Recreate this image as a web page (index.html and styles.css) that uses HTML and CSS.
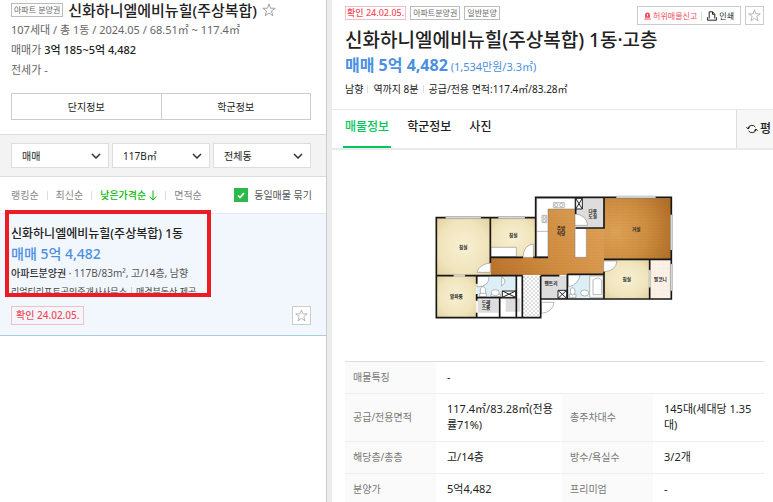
FILE: index.html
```html
<!DOCTYPE html>
<html lang="ko">
<head>
<meta charset="utf-8">
<title>신화하니엘에비뉴힐(주상복합)</title>
<link rel="stylesheet" href="styles.css">
</head>
<body>
<svg class="defs" aria-hidden="true">
  <symbol id="star" viewBox="0 0 14 14"><path d="M7 .9 8.5 5.2 13.2 5.3 9.5 8 10.8 12.7 7 10 3.2 12.7 4.5 8 .8 5.3 5.5 5.2Z" fill="#fff" stroke="currentColor" stroke-width=".9"/></symbol>
</svg>
<div class="app">
  <aside class="complex">
    <header class="summary">
      <div class="summary-title">
        <span class="tag">아파트 분양권</span>
        <h2>신화하니엘에비뉴힐(주상복합)</h2>
        <button class="plain-star" aria-label="관심단지"><svg><use href="#star"/></svg></button>
      </div>
      <p>107세대 / 총 1동 / 2024.05 / 68.51㎡ ~ 117.4㎡</p>
      <p>매매가 <strong>3억 185~5억 4,482</strong></p>
      <p>전세가 -</p>
      <div class="info-buttons">
        <button>단지정보</button>
        <button>학군정보</button>
      </div>
    </header>
    <div class="filters">
      <select aria-label="거래유형"><option>매매</option></select>
      <select aria-label="면적"><option>117B㎡</option></select>
      <select aria-label="동"><option>전체동</option></select>
    </div>
    <div class="sort">
      <nav class="sort-links">
        <a href="#">랭킹순</a>
        <a href="#">최신순</a>
        <a href="#" class="active">낮은가격순<svg viewBox="0 0 8 11"><path d="M4 .5V10M.8 6.5 4 10 7.2 6.5"/></svg></a>
        <a href="#">면적순</a>
      </nav>
      <label class="group"><input type="checkbox" checked>동일매물 묶기</label>
    </div>
    <article class="item">
      <h3>신화하니엘에비뉴힐(주상복합) 1동</h3>
      <p class="item-price">매매 5억 4,482</p>
      <p class="item-spec"><b>아파트분양권</b> · 117B/83m², 고/14층, 남향</p>
      <p class="item-agent"><span>리얼티리프트공인중개사사무소</span><span>매경부동산 제공</span></p>
      <div class="item-foot">
        <span class="confirm">확인 24.02.05.</span>
        <button class="star-box" aria-label="관심매물"><svg><use href="#star"/></svg></button>
      </div>
      <div class="highlight"></div>
    </article>
  </aside>

  <main class="detail">
    <header class="detail-head">
      <div class="detail-top">
        <div class="tags">
          <span class="confirm small">확인 24.02.05.</span>
          <span class="tag">아파트분양권</span>
          <span class="tag">일반분양</span>
        </div>
        <div class="actions">
          <div class="action-group">
            <button class="report"><svg viewBox="0 0 8 9"><path d="M1.2 6.5V3.4a2.8 2.8 0 0 1 5.6 0v3.1ZM.3 7.3h7.4v1.3H.3Z" fill="currentColor"/><path d="M4 2.2v2.6" stroke="#fff"/></svg>허위매물신고</button>
            <button class="print"><svg viewBox="0 0 10 10"><path d="M2.2 7.5V.8h3.4l2.2 2.4v4.3M5.5.8v2.5h2.3M.6 6.3v2.9h8.8V6.3" fill="none" stroke="currentColor"/></svg>인쇄</button>
          </div>
          <button class="star-box" aria-label="관심매물"><svg><use href="#star"/></svg></button>
        </div>
      </div>
      <h1>신화하니엘에비뉴힐(주상복합) 1동·고층</h1>
      <p class="detail-price"><strong>매매 5억 4,482</strong> <span>(1,534만원/3.3㎡)</span></p>
      <p class="detail-meta"><span>남향</span><span>역까지 8분</span><span>공급/전용 면적:117.4㎡/83.28㎡</span></p>
    </header>
    <div class="tabs">
      <nav>
        <a href="#" class="active">매물정보</a>
        <a href="#">학군정보</a>
        <a href="#">사진</a>
      </nav>
      <button class="unit"><svg viewBox="0 0 12 10"><path d="M2 4.5a4 3.6 0 0 1 7.4-1.4M10 5.5a4 3.6 0 0 1-7.4 1.4M.4 3.2 2 5l1.8-1.6M8.2 6.6 10 5l1.6 1.8" fill="none" stroke="currentColor"/></svg>평</button>
    </div>

    <figure class="plan">
      <svg viewBox="0 0 750 405" role="img" aria-label="평면도">
        <defs>
          <radialGradient id="room" r=".75"><stop offset="0" stop-color="#f8f0d2"/><stop offset=".6" stop-color="#f0e4bc"/><stop offset="1" stop-color="#dfcd98"/></radialGradient>
          <linearGradient id="wood" gradientUnits="userSpaceOnUse" x1="185" y1="250" x2="525" y2="60"><stop offset="0" stop-color="#b8722a"/><stop offset=".45" stop-color="#cf8c40"/><stop offset="1" stop-color="#dfa258"/></linearGradient>
          <radialGradient id="living" gradientUnits="userSpaceOnUse" cx="560" cy="125" r="190"><stop offset="0" stop-color="#dda257"/><stop offset=".5" stop-color="#cd8d40"/><stop offset="1" stop-color="#ad6a24"/></radialGradient>
          <pattern id="grain" width="46" height="16" patternUnits="userSpaceOnUse"><path d="M0 4h46M0 12h46M12 4v8M34 12v8" stroke="#8a4d10" stroke-opacity=".14" fill="none"/></pattern>
          <pattern id="check" width="12" height="12" patternUnits="userSpaceOnUse"><path fill="#fff" d="M0 0h12v12H0z"/><path fill="#dedede" d="M0 0h6v6H0zM6 6h6v6H6z"/></pattern>
          <pattern id="tile" width="13" height="13" patternUnits="userSpaceOnUse"><path fill="#fbf1e6" d="M0 0h13v13H0z"/><path d="M0 0h13M0 0v13" stroke="#efe2d5"/></pattern>
        </defs>
        <path fill="#fff" d="M320 22H727V325H335V383H22V83H320Z"/>
        <g fill="url(#room)">
          <path d="M22 83h161v174H22z"/>
          <path d="M185 83h135v119H185z"/>
          <path d="M22 257h120v126H22z"/>
          <path d="M525 210h137v115H525z"/>
        </g>
        <path fill="url(#wood)" d="M357 57h83v58h85v140H185v-53h172Z"/>
        <path fill="url(#living)" d="M525 25h202v182H525z"/>
        <path fill="url(#grain)" d="M357 57h83v58h85V25h202v182H525v48H185v-53h172Z"/>
        <path fill="#ddd" d="M440 25h85v88h-85zM335 257h80v68h-80zM146 328h63v40h-63zM230 325h44v40h-44z"/>
        <path fill="#dceff6" d="M144 259h116v43h-40v20h-76zM418 258h64v65h-64z"/>
        <path fill="url(#check)" d="M281 257h54v126h-54z"/>
        <path fill="url(#tile)" d="M662 210h65v115h-65z"/>
        <g fill="#fff" stroke="#777" stroke-width="1.5">
          <path d="M186 172h76v28h-76zM323 25h115v32h-81v143h-34zM323 124h34M438 115h34v87h-34zM482 258h40v64h-40zM492 270q14-12 26 0v44h-26z"/>
          <path d="M144 259h36q2 30-36 32zM218 260q20 14 0 28z"/>
          <ellipse cx="162" cy="303" rx="8" ry="13"/><path d="M152 310h20v10h-20zM186 312h28v8h-28zM421 313h20v9h-20z"/>
          <ellipse cx="199" cy="308" rx="12" ry="9"/><ellipse cx="431" cy="304" rx="7" ry="11"/><ellipse cx="467" cy="309" rx="12" ry="9"/>
          <path d="M374 38h32v15h-32zM339 76h14v22h-14z"/><circle cx="382" cy="45" r="5"/><circle cx="397" cy="45" r="5"/><circle cx="346" cy="82" r="4"/><circle cx="346" cy="92" r="4"/>
          <path d="M144 247h40v-28q-34 4-40 28ZM282 202h31v-40q-30 4-31 40ZM438 72v34h38q-4-32-38-34ZM524 213h40q-4 31-40 32ZM418 290q30-4 36-37h-36ZM337 337h38q-4 30-38 33Z"/>
        </g>
        <g fill="none" stroke="#171717" stroke-width="5">
          <path d="M22 83H320V22H727V327H335V383H22ZM184 83v136M320 83v119M184 202h98M313 202h44M22 257h52M108 257h173M143 257v24M143 312v20M143 368v15M143 323h119M212 323v60M262 257v126M280 257v126M335 257v80M335 370v13M335 257h56M415 253v74M415 253h111M525 245v82M525 208H727M662 208v32M662 292v35M440 22v50M440 114h85V22"/>
        </g>
        <g fill="#fff" stroke="#222" stroke-width="3">
          <path d="M220 303h40v19h-40zM220 303l40 19M260 303l-40 19M440 25h20v32h-20zM440 25l20 32M460 25l-20 32M387 301h26v24h-26zM387 301l26 24M413 301l-26 24"/>
        </g>
        <g fill="#ddd" stroke="#888">
          <path d="M50 80h106v6H50zM208 80h80v6h-80zM562 18h118v6H562zM724 74h6v106h-6zM724 222h6v80h-6zM75 254h33v5H75zM660 240h5v52h-5z"/>
        </g>
        <g class="plan-labels">
          <text x="103" y="178">침실</text><text x="253" y="141">침실</text><text x="82" y="324">알파룸</text>
          <text x="171" y="342">드레</text><text x="171" y="357">스룸</text><text x="366" y="286">팬트리</text>
          <text x="396" y="119">주방</text><text x="396" y="134">식당</text><text x="491" y="69">다용</text><text x="491" y="84">도실</text>
          <text x="622" y="123">거실</text><text x="593" y="274">침실</text><text x="694" y="274">발코니</text>
        </g>
      </svg>
    </figure>

    <table>
      <colgroup><col class="c-th"><col class="c-td"><col class="c-th"><col></colgroup>
      <tr><th scope="row">매물특징</th><td colspan="3">-</td></tr>
      <tr><th scope="row">공급/전용면적</th><td>117.4㎡/83.28㎡(전용률71%)</td><th scope="row">총주차대수</th><td>145대(세대당 1.35대)</td></tr>
      <tr><th scope="row">해당층/총층</th><td>고/14층</td><th scope="row">방수/욕실수</th><td>3/2개</td></tr>
      <tr><th scope="row">분양가</th><td>5억4,482</td><th scope="row">프리미엄</th><td>-</td></tr>
    </table>
  </main>
</div>
</body>
</html>
```
FILE: styles.css
```css
* { box-sizing: border-box; }

body {
  margin: 0;
  overflow: hidden;
  color: #222;
  background: #fff;
  font: 11px/20px "Noto Sans", "Noto Sans CJK KR", sans-serif;
}

h1, h2, h3, p, figure { margin: 0; }
a { color: inherit; text-decoration: none; }

button {
  margin: 0;
  padding: 0;
  border: 0;
  color: inherit;
  background: none;
  font: inherit;
}

.defs { position: absolute; width: 0; height: 0; }

.app {
  display: grid;
  grid-template-columns: 332px minmax(0, 1fr);
  height: 100vh;
}

/* Complex panel */
.complex {
  border-right: 5px solid #ececec;
  box-shadow: inset -1px 0 #ccc;
  padding-right: 1px;
}

.summary { padding: 0 15px 14px 11px; }
.summary p { color: #666; white-space: nowrap; }
.summary strong { color: #222; font-weight: 500; }

.summary-title {
  display: flex;
  align-items: center;
  gap: 5px;
  height: 20px;
}

.summary-title h2 {
  font-size: 15px;
  font-weight: 500;
  white-space: nowrap;
}

.tag {
  padding: 0 2px;
  border: 1px solid #bbb;
  color: #666;
  font-size: 8px;
  line-height: 12px;
  white-space: nowrap;
}

.plain-star { display: flex; color: #999; }
.plain-star svg { width: 14px; height: 14px; }

.info-buttons {
  display: flex;
  margin-top: 13px;
  border: 1px solid #ccc;
}

.info-buttons button {
  flex: 1;
  height: 25px;
  font-size: 10px;
}

.info-buttons button + button { border-left: 1px solid #ccc; }

.filters {
  display: flex;
  gap: 3px;
  padding: 8px 15px 8px 11px;
  border: solid #ddd;
  border-width: 1px 0;
  background: #f3f3f3;
}

.filters select {
  flex: 1;
  height: 25px;
  padding: 0 10px;
  appearance: none;
  border: 1px solid #ddd;
  border-radius: 0;
  color: #222;
  background: #fff url("data:image/svg+xml,%3Csvg xmlns='http://www.w3.org/2000/svg' width='10' height='6'%3E%3Cpath d='M1 1l4 4 4-4' fill='none' stroke='%23333' stroke-width='1.5'/%3E%3C/svg%3E") no-repeat right 7px center;
  font: inherit;
  font-size: 10px;
}

.sort {
  display: flex;
  justify-content: space-between;
  align-items: center;
  height: 36px;
  padding: 0 14px 0 11px;
  font-size: 10px;
  white-space: nowrap;
}

.sort-links { display: flex; color: #888; }

.sort-links a {
  display: flex;
  align-items: center;
  gap: 3px;
}

.sort-links a + a::before {
  content: "";
  width: 1px;
  height: 9px;
  margin: 0 5px 0 8px;
  background: #ddd;
}

.sort-links .active { color: #05b905; font-weight: 500; }
.sort-links svg { width: 8px; height: 11px; fill: none; stroke: currentColor; }

.group {
  display: flex;
  align-items: center;
  gap: 6px;
  color: #555;
}

.group input {
  width: 14px;
  height: 14px;
  margin: 0;
  appearance: none;
  background: #2db84b url("data:image/svg+xml,%3Csvg xmlns='http://www.w3.org/2000/svg' width='8' height='7'%3E%3Cpath d='M1 3.5l2 2 4-4.5' fill='none' stroke='white' stroke-width='1.7'/%3E%3C/svg%3E") no-repeat center;
}

.item {
  position: relative;
  padding: 10px 15px 10px 11px;
  border-top: 1px solid #e4e8ee;
  border-bottom: 1px solid #a9c9e8;
  background: #f2f7fe;
  white-space: nowrap;
}

.item h3 { font-size: 12px; font-weight: 500; }

.item-price {
  color: #4a90e2;
  font-size: 14px;
  font-weight: 500;
  line-height: 20px;
}

.item-spec { color: #555; font-size: 10px; line-height: 18px; }
.item-spec b { color: #333; font-weight: 500; }

.item-agent {
  display: flex;
  height: 8px;
  margin: 3px 0 13px;
  overflow: hidden;
  color: #444;
  font-size: 9px;
  line-height: 14px;
}

.item-agent span + span::before {
  content: "";
  display: inline-block;
  width: 1px;
  height: 8px;
  margin: 0 4px;
  background: #ccc;
}

.item-foot { display: flex; justify-content: space-between; }

.confirm {
  padding: 0 4px;
  border: 1px solid #f5bcc4;
  color: #f34c59;
  font-size: 10px;
  font-weight: 500;
  line-height: 17px;
  white-space: nowrap;
}

.confirm.small { padding: 0 1px; font-size: 9px; line-height: 12px; }

.star-box {
  display: grid;
  place-items: center;
  width: 19px;
  height: 19px;
  border: 1px solid #ccc;
  color: #aaa;
  background: #fff;
}

.star-box svg { width: 13px; height: 13px; }

.highlight {
  position: absolute;
  top: -4px;
  left: 5px;
  width: 206px;
  height: 87px;
  border: 4px solid #ed1c24;
}

/* Detail panel */
.detail-head { padding: 6px 9px 10px 13px; white-space: nowrap; }

.detail-top {
  display: flex;
  justify-content: space-between;
  height: 22px;
}

.tags { display: flex; align-items: flex-start; gap: 4px; }
.actions { display: flex; align-items: flex-start; gap: 4px; }

.action-group {
  display: flex;
  align-items: center;
  height: 19px;
  padding: 0 6px;
  border: 1px solid #ccc;
  font-size: 8px;
}

.action-group button {
  display: flex;
  align-items: center;
  gap: 2px;
  line-height: 10px;
}

.report { color: #f34c59; }
.report svg { width: 7px; height: 8px; }
.action-group .print { margin-left: 4px; padding-left: 5px; border-left: 1px solid #ddd; }
.print svg { width: 10px; height: 10px; }

.detail-head h1 {
  font-size: 19px;
  font-weight: 500;
  line-height: 24px;
}

.detail-price { color: #4a90e2; line-height: 26px; }
.detail-price strong { font-size: 16px; font-weight: 700; }

.detail-meta { display: flex; font-size: 10px; line-height: 19px; }

.detail-meta span + span::before {
  content: "";
  display: inline-block;
  width: 1px;
  height: 8px;
  margin: 0 5px 0 4px;
  background: #ddd;
}

.tabs {
  display: flex;
  justify-content: space-between;
  border: solid #eaeaea;
  border-width: 1px 0 2px;
  font-size: 12px;
}

.tabs nav { display: flex; gap: 14px; padding-left: 11px; }

.tabs a {
  height: 38px;
  padding: 0 2px;
  font-weight: 500;
  line-height: 34px;
}

.tabs .active { border-bottom: 2px solid #03c75a; color: #03c75a; }

.unit {
  display: flex;
  align-items: center;
  gap: 2px;
  padding: 0 2px 0 9px;
  border-left: 1px solid #ddd;
  background: #f7f7f7;
  font-weight: 500;
}

.unit svg { width: 12px; height: 10px; }

.plan {
  display: flex;
  justify-content: center;
  padding: 40px 0 36px 3px;
}

.plan svg { width: 250px; height: 135px; }

.plan-labels text {
  fill: #222;
  font-size: 14px;
  font-weight: 700;
  text-anchor: middle;
}

table {
  width: calc(100% - 22px);
  margin-left: 13px;
  border-collapse: collapse;
  border-top: 1px solid #ddd;
  table-layout: fixed;
  line-height: 16px;
}

.c-th { width: 91px; }
.c-td { width: 126px; }

tr + tr { border-top: 1px solid #eee; }

th, td {
  padding: 7px 4px 8px 11px;
  text-align: left;
  word-break: break-all;
}

th {
  padding-left: 8px;
  color: #777;
  background: #fafafa;
  font-size: 10px;
  font-weight: 400;
}
```
